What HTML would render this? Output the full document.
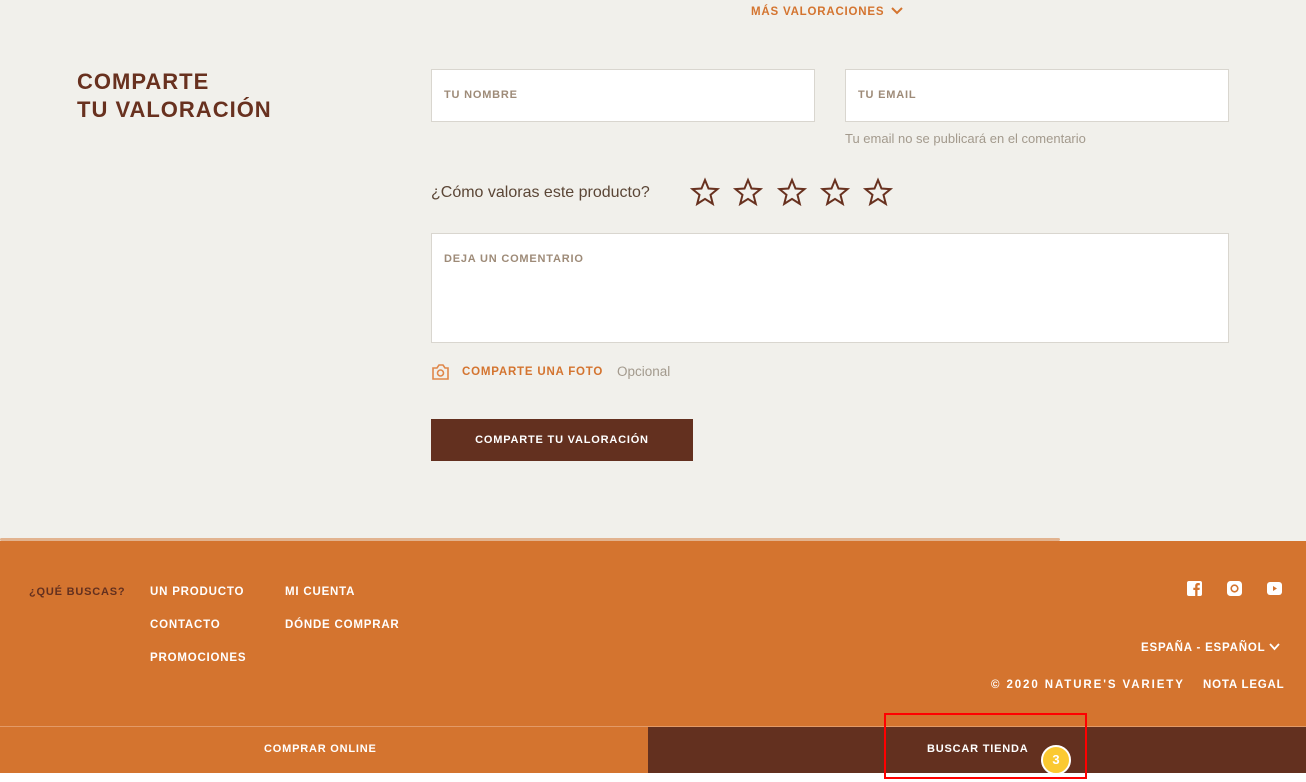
<!DOCTYPE html>
<html><head><meta charset="utf-8"><style>
*{margin:0;padding:0;box-sizing:border-box}
body{width:1306px;height:782px;overflow:hidden;background:#f1f0eb;font-family:"Liberation Sans",sans-serif;position:relative}
.a{position:absolute}
.inp{position:absolute;background:#fff;border:1px solid #d9d6cf}
.lbl{position:absolute;font-size:11px;font-weight:bold;color:#9e8b78;letter-spacing:0.8px}
.fw{color:#fff;font-weight:bold;font-size:11.5px;letter-spacing:0.8px;position:absolute}
</style></head><body>
<div class="a" style="left:751px;top:6px;color:#d4742f;font-size:11.5px;font-weight:bold;letter-spacing:0.8px">MÁS VALORACIONES <svg width="12" height="8" viewBox="0 0 12 8" style="margin-left:3px"><path d="M1 1l5 5 5-5" stroke="#d4742f" stroke-width="2" fill="none"/></svg></div>
<div class="a" style="left:77px;top:68px;color:#68311f;font-size:22px;font-weight:bold;line-height:28px;letter-spacing:1px">COMPARTE<br>TU VALORACIÓN</div>
<div class="inp" style="left:431px;top:69px;width:384px;height:53px"></div>
<div class="lbl" style="left:444px;top:89px">TU NOMBRE</div>
<div class="inp" style="left:845px;top:69px;width:384px;height:53px"></div>
<div class="lbl" style="left:858px;top:89px">TU EMAIL</div>
<div class="a" style="left:845px;top:131px;font-size:13px;color:#a39a8d">Tu email no se publicará en el comentario</div>
<div class="a" style="left:431px;top:184px;font-size:16px;color:#5b4636">¿Cómo valoras este producto?</div>
<svg class="a" style="left:690px;top:177px" width="210" height="30" viewBox="0 0 210 30">
<g fill="none" stroke="#68311f" stroke-width="2" stroke-linejoin="miter">
<path id="s" d="M15 3l3.5 8.5 9 .6-7 5.8 2.3 9-7.8-5-7.8 5 2.3-9-7-5.8 9-.6z"/>
<use href="#s" x="43"/><use href="#s" x="87"/><use href="#s" x="130"/><use href="#s" x="173"/>
</g></svg>
<div class="inp" style="left:431px;top:233px;width:798px;height:110px"></div>
<div class="lbl" style="left:444px;top:253px">DEJA UN COMENTARIO</div>
<svg class="a" style="left:431px;top:363px" width="19" height="18" viewBox="0 0 19 18"><path d="M2 5h4l2-3h4l2 3h3v11H2z" fill="none" stroke="#e0874a" stroke-width="1.6"/><circle cx="9.5" cy="10" r="3" fill="none" stroke="#e0874a" stroke-width="1.6"/></svg>
<div class="a" style="left:462px;top:366px;font-size:11.5px;font-weight:bold;color:#d4742f;letter-spacing:0.8px">COMPARTE UNA FOTO</div>
<div class="a" style="left:617px;top:364px;font-size:13.5px;color:#a39a8d">Opcional</div>
<div class="a" style="left:431px;top:419px;width:262px;height:42px;background:#63301f;color:#fff;font-size:11px;font-weight:bold;letter-spacing:0.8px;text-align:center;line-height:42px">COMPARTE TU VALORACIÓN</div>
<div class="a" style="left:0;top:541px;width:1306px;height:186px;background:#d4742f"></div>
<div class="a" style="left:0;top:538px;width:1060px;height:3px;background:#d98a52;border-radius:2px;opacity:.6"></div>
<div class="fw" style="left:29px;top:586px;color:#63301f;font-size:11px">¿QUÉ BUSCAS?</div>
<div class="fw" style="left:150px;top:586px">UN PRODUCTO</div>
<div class="fw" style="left:150px;top:619px">CONTACTO</div>
<div class="fw" style="left:150px;top:652px">PROMOCIONES</div>
<div class="fw" style="left:285px;top:586px">MI CUENTA</div>
<div class="fw" style="left:285px;top:619px">DÓNDE COMPRAR</div>
<svg class="a" style="left:1187px;top:581px" width="15" height="15"><rect width="15" height="15" rx="2" fill="#fff"/><path d="M10.5 15V9h2l.3-2.3h-2.3V5.3c0-.7.2-1.1 1.1-1.1h1.2V2.1c-.2 0-.9-.1-1.7-.1-1.7 0-2.9 1-2.9 2.9v1.8H6.3V9h1.9v6z" fill="#d4742f"/></svg>
<svg class="a" style="left:1227px;top:581px" width="15" height="15"><rect width="15" height="15" rx="3.5" fill="#fff"/><circle cx="7.5" cy="7.5" r="3.3" fill="none" stroke="#d4742f" stroke-width="1.6"/></svg>
<svg class="a" style="left:1267px;top:582px" width="15" height="13"><rect width="15" height="13" rx="3" fill="#fff"/><path d="M6 4v5l4-2.5z" fill="#d4742f"/></svg>
<div class="fw" style="left:1141px;top:642px">ESPAÑA - ESPAÑOL <svg width="11" height="8" viewBox="0 0 11 8"><path d="M1 1l4.5 5 4.5-5" stroke="#fff" stroke-width="1.8" fill="none"/></svg></div>
<div class="fw" style="left:991px;top:679px;letter-spacing:1.9px">© 2020 NATURE'S VARIETY</div>
<div class="fw" style="left:1203px;top:679px">NOTA LEGAL</div>
<div class="a" style="left:0;top:726px;width:1306px;height:1px;background:#e39a67"></div>
<div class="a" style="left:0;top:727px;width:648px;height:46px;background:#d4742f"></div>
<div class="a" style="left:648px;top:727px;width:658px;height:46px;background:#63301f"></div>
<div class="fw" style="left:264px;top:743px;font-size:11px">COMPRAR ONLINE</div>
<div class="fw" style="left:927px;top:743px;font-size:11px">BUSCAR TIENDA</div>
<div class="a" style="left:0;top:773px;width:1306px;height:9px;background:#fff"></div>
<div class="a" style="left:884px;top:713px;width:203px;height:66px;border:2px solid #f00"></div>
<div class="a" style="left:1041px;top:745px;width:30px;height:30px;border-radius:50%;background:#fbc931;border:2px solid #fff;color:#fff;font-weight:bold;font-size:13px;text-align:center;line-height:26px">3</div>
</body></html>
